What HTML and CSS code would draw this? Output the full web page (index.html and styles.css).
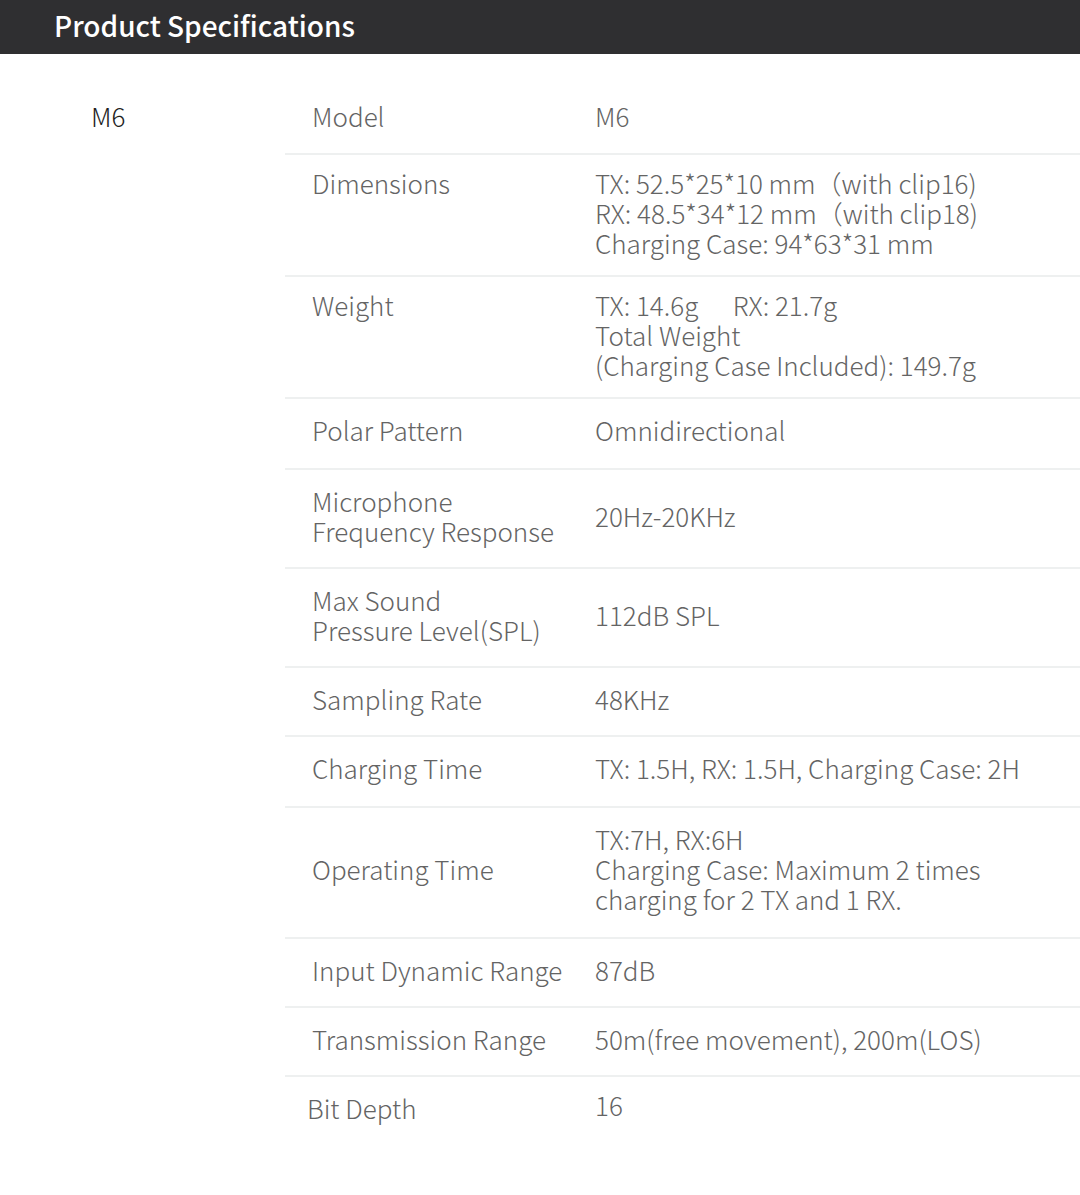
FILE: index.html
```html
<!DOCTYPE html>
<html lang="en">
<head>
  <meta charset="UTF-8" />
  <title>Product Specifications</title>
  <link rel="stylesheet" href="styles.css">
</head>
<body>

<header class="bar">
  <h1>Product Specifications</h1>
</header>

<section class="specs">
  <div class="model-name">M6</div>

  <table class="spec-table">
    <tr>
      <td class="label">Model</td>
      <td class="value">M6</td>
    </tr>
    <tr class="tight">
      <td class="label">Dimensions</td>
      <td class="value">TX: 52.5*25*10 mm（with clip16)<br>RX: 48.5*34*12 mm（with clip18)<br>Charging Case: 94*63*31 mm</td>
    </tr>
    <tr class="tight">
      <td class="label">Weight</td>
      <td class="value">TX: 14.6g &nbsp;&nbsp;&nbsp;&nbsp; RX: 21.7g<br>Total Weight<br>(Charging Case Included): 149.7g</td>
    </tr>
    <tr class="roomy">
      <td class="label">Polar Pattern</td>
      <td class="value">Omnidirectional</td>
    </tr>
    <tr>
      <td class="label">Microphone<br>Frequency Response</td>
      <td class="value">20Hz-20KHz</td>
    </tr>
    <tr>
      <td class="label">Max Sound<br>Pressure Level(SPL)</td>
      <td class="value">112dB SPL</td>
    </tr>
    <tr>
      <td class="label">Sampling Rate</td>
      <td class="value">48KHz</td>
    </tr>
    <tr class="roomy">
      <td class="label">Charging Time</td>
      <td class="value">TX: 1.5H, RX: 1.5H, Charging Case: 2H</td>
    </tr>
    <tr class="roomy">
      <td class="label">Operating Time</td>
      <td class="value">TX:7H, RX:6H<br>Charging Case: Maximum 2 times<br>charging for 2 TX and 1 RX.</td>
    </tr>
    <tr>
      <td class="label">Input Dynamic Range</td>
      <td class="value">87dB</td>
    </tr>
    <tr>
      <td class="label">Transmission Range</td>
      <td class="value">50m(free movement), 200m(LOS)</td>
    </tr>
    <tr class="last">
      <td class="label">Bit Depth</td>
      <td class="value">16</td>
    </tr>
  </table>
</section>

</body>
</html>
```

FILE: styles.css
```css
body {
  margin: 0;
  background: #fff;
  font-family: "Noto Sans CJK SC", "Noto Sans", sans-serif;
  overflow-x: hidden;
}
.bar {
  background: #2f2f31;
  height: 54px;
  box-sizing: border-box;
  padding: 0 0 4px 54px;
  display: flex;
  align-items: center;
}
.bar h1 {
  margin: 0;
  color: #fff;
  font-size: 28px;
  font-weight: 500;
  line-height: 1;
}
.specs {
  display: flex;
  padding-top: 31px;
  padding-bottom: 60px;
}
.model-name {
  flex: 0 0 285px;
  box-sizing: border-box;
  padding-left: 91px;
  padding-top: 16px;
  font-size: 26px;
  line-height: 30px;
  color: #1e1e1e;
  font-weight: 300;
}
.spec-table {
  flex: 0 0 820px;
  border-collapse: collapse;
  font-size: 26px;
  line-height: 30px;
  color: #646464;
  font-weight: 300;
}
.spec-table tr {
  border-bottom: 2px solid #eef0f0;
}
.spec-table td {
  padding: 16px 0 21px;
  vertical-align: middle;
  white-space: nowrap;
}
.spec-table .label {
  width: 283px;
  padding-left: 27px;
}
.spec-table tr:first-child td {
  padding-bottom: 22px;
}
.spec-table tr.roomy td {
  padding-bottom: 23px;
}
.spec-table tr.tight td {
  padding: 13px 0 17px;
  vertical-align: top;
}
.spec-table tr.tight .label {
  padding-left: 27px;
}
.spec-table tr.last {
  border-bottom: none;
}
.spec-table tr.last .label {
  padding-left: 22px;
  padding-top: 16px;
  vertical-align: top;
}
.spec-table tr.last .value {
  padding-top: 13px;
  vertical-align: top;
}
```
